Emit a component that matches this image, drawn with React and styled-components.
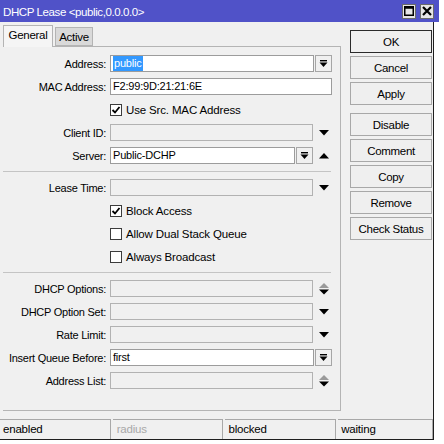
import React from 'react';
import styled, { createGlobalStyle } from 'styled-components';

const Global = createGlobalStyle`
  html, body { margin: 0; padding: 0; background: #ffffff; }
  body {
    font-family: "Liberation Sans", Arial, sans-serif;
    font-size: 11px;
    color: #000;
  }
  * { box-sizing: border-box; }
`;

const Screen = styled.div`
  width: 444px;
  height: 444px;
  overflow: hidden;
  background: #ffffff;
`;

const Window = styled.div`
  width: 434px;
  height: 440px;
  background: #f0f0f0;
  border-right: 1px solid #1e1e1e;
  border-bottom: 1px solid #1e1e1e;
  display: flex;
  flex-direction: column;
`;

const TitleBar = styled.div`
  width: 439px;
  height: 22px;
  flex: none;
  background: #5052c8;
  color: #fff;
  display: flex;
  align-items: center;
  padding: 0 5px 0 3px;
  font-size: 11.5px;
  letter-spacing: -0.4px;
`;

const TitleText = styled.span`
  padding-top: 1px;
`;

const TitleButtons = styled.div`
  margin-left: auto;
  display: flex;
  gap: 4px;
`;

const TitleBtn = styled.div`
  width: 14px;
  height: 15px;
  background: #e6e6e6;
  border: 1px solid #6a6a6a;
  display: flex;
  align-items: center;
  justify-content: center;
`;

const Main = styled.div`
  flex: 1;
  display: flex;
  padding-top: 3px;
  min-height: 0;
`;

const LeftCol = styled.div`
  width: 338px;
  margin-left: 3px;
  display: flex;
  flex-direction: column;
`;

const TabRow = styled.div`
  height: 21px;
  display: flex;
  align-items: flex-end;
  position: relative;
  z-index: 1;
`;

const Tab = styled.div`
  width: ${(p) => p.w}px;
  height: ${(p) => (p.selected ? 22 : 19)}px;
  margin-bottom: ${(p) => (p.selected ? -1 : 0)}px;
  margin-left: ${(p) => (p.selected ? 0 : 2)}px;
  background: ${(p) => (p.selected ? '#f5f5f5' : '#d9d9d9')};
  border: 1px solid #b4b4b4;
  border-bottom: ${(p) => (p.selected ? 'none' : '1px solid #b4b4b4')};
  display: flex;
  align-items: center;
  justify-content: center;
  padding-bottom: ${(p) => (p.selected ? 3 : 0)}px;
  font-size: 11.5px;
  letter-spacing: -0.3px;
`;

const Panel = styled.div`
  height: 365px;
  border-top: 1px solid #b4b4b4;
  border-right: 1px solid #b4b4b4;
  border-bottom: 1px solid #b4b4b4;
  padding-top: 5px;
  display: flex;
  flex-direction: column;
`;

const Row = styled.div`
  height: 23px;
  display: grid;
  grid-template-columns: 103px 222px;
  column-gap: 4px;
  align-items: center;
`;

const Label = styled.div`
  text-align: right;
  white-space: nowrap;
  letter-spacing: -0.25px;
`;

const Field = styled.div`
  display: flex;
  align-items: center;
  gap: 1px;
  height: 17px;
`;

const Input = styled.div`
  flex: 1;
  height: 17px;
  min-width: 0;
  background: ${(p) => (p.disabled ? '#f0f0f0' : '#ffffff')};
  border: 1px solid ${(p) => (p.disabled ? '#b2b2b2' : '#9c9c9c')};
  padding: 0 2px;
  line-height: 15px;
  white-space: nowrap;
  overflow: hidden;
  letter-spacing: -0.2px;
`;

const Selected = styled.span`
  background: #3399ff;
  color: #fff;
  display: inline-block;
  height: 15px;
  padding: 0 1px;
`;

const BoxBtn = styled.div`
  width: 17px;
  height: 17px;
  flex: none;
  background: #f0f0f0;
  border: 1px solid #a6a6a6;
  display: flex;
  align-items: center;
  justify-content: center;
`;

const ArrowCell = styled.div`
  width: 18px;
  height: 17px;
  flex: none;
  display: flex;
  align-items: center;
  justify-content: center;
  padding-left: 2px;
`;

const CheckRow = styled.div`
  display: flex;
  align-items: center;
  gap: 4px;
  grid-column: 2;
  letter-spacing: -0.15px;
  font-size: 11.5px;
`;

const Box = styled.div`
  width: 12px;
  height: 12px;
  background: #fff;
  border: 1px solid #3c3c3c;
  display: flex;
  align-items: center;
  justify-content: center;
`;

const Separator = styled.div`
  height: 1px;
  background: #c4c4c4;
  margin: 4px 9px 4px 0;
  flex: none;
`;

const RightCol = styled.div`
  width: 82px;
  margin-left: 9px;
  padding-top: 5px;
  display: flex;
  flex-direction: column;
  gap: 3px;
`;

const Button = styled.div`
  height: 23px;
  flex: none;
  background: #efefef;
  border: 1px solid ${(p) => (p.primary ? '#2a2a2a' : '#a8a8a8')};
  margin-top: ${(p) => (p.spaced ? 5 : 0)}px;
  display: flex;
  align-items: center;
  justify-content: center;
  font-size: 11.5px;
  letter-spacing: -0.3px;
`;

const StatusBar = styled.div`
  height: 20px;
  display: flex;
  gap: 2px;
  flex: none;
`;

const Cell = styled.div`
  width: ${(p) => p.w}px;
  height: 20px;
  border-top: 1px solid #a8a8a8;
  border-right: 1px solid #a8a8a8;
  padding-left: ${(p) => p.pl || 3}px;
  line-height: 19px;
  color: ${(p) => (p.dim ? '#a8a8a8' : '#000')};
  font-size: 11.5px;
  letter-spacing: -0.2px;
`;

const DropIcon = () => (
  <svg width="9" height="9" viewBox="0 0 9 9">
    <rect x="1" y="1" width="7" height="1.4" fill="#000" />
    <path d="M0.5 3.5 H8.5 L4.5 8 Z" fill="#000" />
  </svg>
);

const Down = () => (
  <svg width="10" height="6" viewBox="0 0 10 6">
    <path d="M0 0 H10 L5 5.5 Z" fill="#000" />
  </svg>
);

const Up = () => (
  <svg width="10" height="6" viewBox="0 0 10 6">
    <path d="M0 5.5 H10 L5 0 Z" fill="#000" />
  </svg>
);

const UpDown = () => (
  <svg width="10" height="12" viewBox="0 0 10 12">
    <path d="M0 5 H10 L5 0 Z" fill="#9a9a9a" />
    <path d="M0 6.5 H10 L5 11.5 Z" fill="#000" />
  </svg>
);

const Check = () => (
  <svg width="10" height="10" viewBox="0 0 10 10">
    <path d="M1.5 5 L4 7.5 L8.5 2" stroke="#000" strokeWidth="1.8" fill="none" />
  </svg>
);

const CheckItem = ({ checked, children }) => (
  <Row>
    <CheckRow>
      <Box>{checked && <Check />}</Box>
      <span>{children}</span>
    </CheckRow>
  </Row>
);

const FieldRow = ({ label, children }) => (
  <Row>
    <Label>{label}</Label>
    <Field>{children}</Field>
  </Row>
);

export default function App() {
  return (
    <Screen>
      <Global />
      <Window>
        <TitleBar>
          <TitleText>DHCP Lease &lt;public,0.0.0.0&gt;</TitleText>
          <TitleButtons>
            <TitleBtn>
              <svg width="10" height="10" viewBox="0 0 10 10">
                <rect x="0.75" y="0.75" width="8.5" height="8.5" fill="none" stroke="#000" strokeWidth="1.5" />
                <rect x="0.75" y="0.75" width="8.5" height="2" fill="#000" />
              </svg>
            </TitleBtn>
            <TitleBtn>
              <svg width="10" height="10" viewBox="0 0 10 10">
                <path d="M1 1 L9 9 M9 1 L1 9" stroke="#000" strokeWidth="2.2" />
              </svg>
            </TitleBtn>
          </TitleButtons>
        </TitleBar>
        <Main>
          <LeftCol>
            <TabRow>
              <Tab selected w={50}>General</Tab>
              <Tab w={38}>Active</Tab>
            </TabRow>
            <Panel>
              <FieldRow label="Address:">
                <Input><Selected>public</Selected></Input>
                <BoxBtn><DropIcon /></BoxBtn>
              </FieldRow>
              <FieldRow label="MAC Address:">
                <Input>F2:99:9D:21:21:6E</Input>
              </FieldRow>
              <CheckItem checked>Use Src. MAC Address</CheckItem>
              <FieldRow label="Client ID:">
                <Input disabled />
                <ArrowCell><Down /></ArrowCell>
              </FieldRow>
              <FieldRow label="Server:">
                <Input>Public-DCHP</Input>
                <BoxBtn><DropIcon /></BoxBtn>
                <ArrowCell><Up /></ArrowCell>
              </FieldRow>
              <Separator />
              <FieldRow label="Lease Time:">
                <Input disabled />
                <ArrowCell><Down /></ArrowCell>
              </FieldRow>
              <CheckItem checked>Block Access</CheckItem>
              <CheckItem>Allow Dual Stack Queue</CheckItem>
              <CheckItem>Always Broadcast</CheckItem>
              <Separator />
              <FieldRow label="DHCP Options:">
                <Input disabled />
                <ArrowCell><UpDown /></ArrowCell>
              </FieldRow>
              <FieldRow label="DHCP Option Set:">
                <Input disabled />
                <ArrowCell><Down /></ArrowCell>
              </FieldRow>
              <FieldRow label="Rate Limit:">
                <Input disabled />
                <ArrowCell><Down /></ArrowCell>
              </FieldRow>
              <FieldRow label="Insert Queue Before:">
                <Input>first</Input>
                <BoxBtn><DropIcon /></BoxBtn>
              </FieldRow>
              <FieldRow label="Address List:">
                <Input disabled />
                <ArrowCell><UpDown /></ArrowCell>
              </FieldRow>
            </Panel>
          </LeftCol>
          <RightCol>
            <Button primary>OK</Button>
            <Button>Cancel</Button>
            <Button>Apply</Button>
            <Button spaced>Disable</Button>
            <Button>Comment</Button>
            <Button>Copy</Button>
            <Button>Remove</Button>
            <Button>Check Status</Button>
          </RightCol>
        </Main>
        <StatusBar>
          <Cell w={111}>enabled</Cell>
          <Cell w={111} pl={4} dim>radius</Cell>
          <Cell w={111}>blocked</Cell>
          <Cell w={95}>waiting</Cell>
        </StatusBar>
      </Window>
    </Screen>
  );
}
